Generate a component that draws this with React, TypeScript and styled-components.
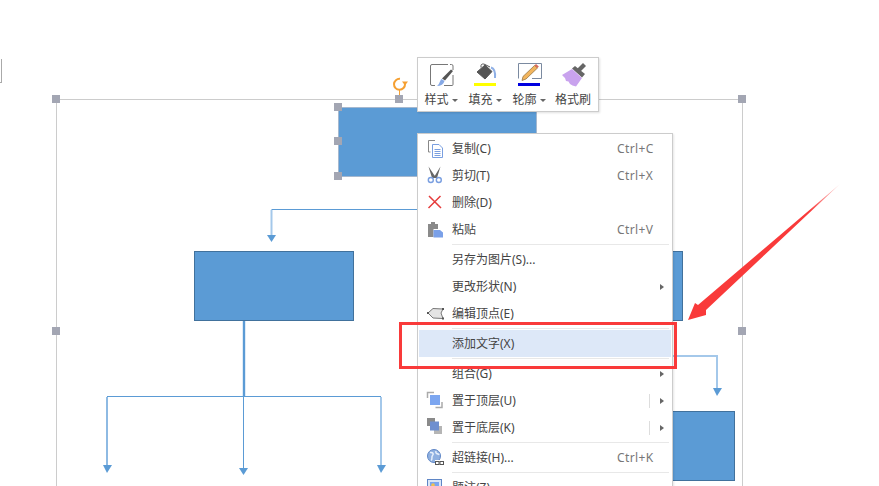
import React, { FunctionComponent, ReactNode } from 'react';
import styled, { createGlobalStyle } from 'styled-components';

const GlobalStyle = createGlobalStyle`
  html, body {
    margin: 0;
    padding: 0;
    background: #fff;
    overflow: hidden;
  }
`;

const Canvas = styled.div`
  position: relative;
  width: 879px;
  height: 486px;
  overflow: hidden;
  background: #fff;
  font-family: "Noto Sans", "Noto Sans CJK SC", sans-serif;
  font-size: 12px;
  color: #444;
`;

// the scrap of a page edge on the far left
const EdgeMark = styled.div`
  position: absolute;
  left: 0;
  top: 59px;
  width: 1px;
  height: 23px;
  border-right: 1px solid #aaa;
  border-bottom: 1px solid #aaa;
`;

const SelectionFrame = styled.div`
  position: absolute;
  left: 56px;
  top: 99px;
  width: 685px;
  height: 420px;
  border: 1px solid #ccc;
`;

const Shape = styled.div<{ $x: number; $y: number; $w: number; $h: number; $selected?: boolean }>`
  position: absolute;
  left: ${(p) => p.$x}px;
  top: ${(p) => p.$y}px;
  width: ${(p) => p.$w}px;
  height: ${(p) => p.$h}px;
  box-sizing: border-box;
  background: #5b9bd5;
  border: 1px solid ${(p) => (p.$selected ? '#a5b8cf' : '#41719c')};
`;

const Handle = styled.div<{ $x: number; $y: number }>`
  position: absolute;
  left: ${(p) => p.$x - 4}px;
  top: ${(p) => p.$y - 4}px;
  width: 8px;
  height: 8px;
  background: #a3a6b3;
`;

const Lines = styled.svg`
  position: absolute;
  left: 0;
  top: 0;
`;

const RotateGrip = styled.svg`
  position: absolute;
  left: 391px;
  top: 76px;
`;

const Toolbar = styled.div`
  position: absolute;
  left: 417px;
  top: 57px;
  display: flex;
  width: 182px;
  height: 55px;
  box-sizing: border-box;
  padding: 3px 1px;
  background: #fff;
  border: 1px solid #ccc;
  box-shadow: 1px 1px 2px rgba(0, 0, 0, 0.12);
`;

const ToolItem = styled.div`
  display: flex;
  flex-direction: column;
  align-items: center;
  width: 44px;
  svg {
    display: block;
  }
`;

const ToolLabel = styled.div`
  display: flex;
  align-items: center;
  gap: 3px;
  height: 16px;
  margin-top: 3px;
  line-height: 16px;
  white-space: nowrap;
`;

const Caret = styled.span`
  width: 0;
  height: 0;
  margin-top: 1px;
  border-left: 3px solid transparent;
  border-right: 3px solid transparent;
  border-top: 3px solid #666;
`;

const Menu = styled.div`
  position: absolute;
  left: 417px;
  top: 133px;
  width: 256px;
  box-sizing: border-box;
  padding: 1px;
  background: #fff;
  border: 1px solid #ccc;
  box-shadow: 1px 1px 2px rgba(0, 0, 0, 0.1);
`;

const Row = styled.div<{ $active?: boolean }>`
  display: flex;
  align-items: center;
  height: 27px;
  background: ${(p) => (p.$active ? '#dde8f8' : 'transparent')};
`;

const IconCell = styled.div`
  align-self: flex-start;
  width: 27px;
  height: 20px;
  margin-top: 4px;
  padding-left: 6px;
  svg {
    display: block;
  }
`;

const RowLabel = styled.div`
  flex: 1;
  line-height: 27px;
  white-space: nowrap;
`;

const Shortcut = styled.div`
  width: 54px;
  color: #777;
  letter-spacing: 0.4px;
`;

const SubmenuDivider = styled.div`
  width: 1px;
  height: 14px;
  margin-right: 10px;
  background: #ddd;
`;

const SubmenuArrow = styled.div`
  width: 0;
  height: 0;
  margin-right: 7px;
  border-top: 3px solid transparent;
  border-bottom: 3px solid transparent;
  border-left: 4px solid #666;
`;

const Separator = styled.div`
  height: 1px;
  margin: 1px 2px 1px 33px;
  background: #e8e8e8;
`;

const Callout = styled.div`
  position: absolute;
  left: 399px;
  top: 322px;
  width: 278px;
  height: 47px;
  box-sizing: border-box;
  border: 3px solid #f93a3a;
`;

const Pointer = styled.svg`
  position: absolute;
  left: 680px;
  top: 176px;
`;

const Icon20: FunctionComponent<{ children: ReactNode }> = ({ children }) => (
  <svg width="20" height="20" viewBox="0 0 20 20" fill="none">{children}</svg>
);

const Icon28: FunctionComponent<{ children: ReactNode }> = ({ children }) => (
  <svg width="28" height="28" viewBox="0 0 28 28" fill="none">{children}</svg>
);

const StyleIcon = () => (
  <Icon28>
    <path d="M21 3.500H5a1.500 1.500 0 0 0-1.500 1.500v18A1.500 1.500 0 0 0 5 24.500h3M17 24.500h8a1 1 0 0 0 1-1V14M26 9V5a1.500 1.500 0 0 0-1.500-1.500H23" stroke="#777" />
    <path d="M26 10 24 8.500 15 17.500 18 19.500Z" fill="#555" />
    <path d="M14.500 18 17.500 20C16.500 23.500 14 25 10 25 12.500 23.500 12.500 20 14.500 18Z" fill="#86a9e6" />
  </Icon28>
);

const FillIcon = () => (
  <Icon28>
    <path d="M14 4 21 10.500 14 18 6 11Z" fill="#555" stroke="#555" strokeLinejoin="round" />
    <path d="M10 6.500V4.500C10 3 12.500 2.500 14 3.500L19 6" stroke="#555" />
    <path d="M20 6.500C23.500 7.500 24.500 11 24 17" stroke="#8fb0e6" strokeWidth="2" />
    <rect x="3" y="22" width="22" height="3" fill="#ffff00" />
  </Icon28>
);

const OutlineIcon = () => (
  <Icon28>
    <path d="M3.500 17.500V2.500H26.500V17.500H17" stroke="#7b8aa0" />
    <path d="M19.500 4.500 22.500 7 11 18 7 19.500 8 15.500Z" fill="#f2b55e" stroke="#8a6a3a" strokeWidth="0.7" />
    <path d="M19.500 4.500 21 3 23.800 5.600 22.500 7Z" fill="#d9685a" />
    <rect x="3" y="22" width="22" height="3" fill="#0000e0" />
  </Icon28>
);

const PainterIcon = () => (
  <Icon28>
    <path d="M18 8 24 2 27 5 21 11Z" fill="#666" />
    <path d="M13 7.500 16 5 26 13 23 16.500Z" fill="#666" />
    <path d="M3 14 13 8 23 17 17 25.500 13.500 24.500 11 23 9.500 20.500 7 20 6 17Z" fill="#c9a3ee" />
  </Icon28>
);

const CopyIcon = () => (
  <Icon20>
    <path d="M10 1.500H3.500V13H5.500" stroke="#888" />
    <path d="M7.500 5.500H14L17.500 9V18.500H7.500Z" fill="#fff" stroke="#7a9fe0" />
    <path d="M9.500 10.500H15.500M9.500 12.500H15.500M9.500 14.500H15.500M9.500 16.500H15.500" stroke="#7a9fe0" />
  </Icon20>
);

const CutIcon = () => (
  <Icon20>
    <path d="M3.500 0.500 9.500 9.500 12 12 7 12Z" fill="#666" />
    <path d="M15.500 0.500 10 9.500 7 12 12 12Z" fill="#666" />
    <circle cx="5.800" cy="14" r="2.500" stroke="#7a9fe0" strokeWidth="1.400" />
    <circle cx="13.800" cy="14" r="2.500" stroke="#7a9fe0" strokeWidth="1.400" />
  </Icon20>
);

const DeleteIcon = () => (
  <Icon20>
    <path d="M4 3 16 15M15.500 3 3.500 15" stroke="#e63c3c" strokeWidth="1.500" />
  </Icon20>
);

const PasteIcon = () => (
  <Icon20>
    <path d="M3 4H6V2H10V4H13V9H8.500V17H3Z" fill="#8a8a8a" />
    <path d="M8.500 10H15L18 12.500V17.500H8.500Z" fill="#7aa0e8" />
  </Icon20>
);

const EditPointsIcon = () => (
  <Icon20>
    <path d="M3 9 8 4.500 18 5 16 9 18 14.500 8 14Z" fill="#e4e4e4" stroke="#777" />
    <rect x="2" y="8" width="2" height="2" fill="#555" />
    <rect x="17" y="4" width="2" height="2" fill="#555" />
    <rect x="17" y="13.500" width="2" height="2" fill="#555" />
  </Icon20>
);

const FrontIcon = () => (
  <Icon20>
    <path d="M2.500 7V1.500H9" stroke="#aaa" strokeWidth="1.500" />
    <path d="M17 11V16.500H10.500" stroke="#aaa" strokeWidth="1.500" />
    <rect x="5" y="4" width="10" height="10" fill="#7ca6f0" />
  </Icon20>
);

const BackIcon = () => (
  <Icon20>
    <rect x="2" y="0" width="8" height="8" fill="#8a8a8a" />
    <rect x="9" y="8" width="8" height="8" fill="#b5b5b5" />
    <rect x="5" y="3.500" width="9" height="9" fill="#6f8fcf" />
  </Icon20>
);

const LinkIcon = () => (
  <Icon20>
    <circle cx="9" cy="8" r="6.500" fill="#8fb0e0" stroke="#5f86c6" />
    <path d="M5 4.500C8 4 9 6 7.500 7.500 6 9 8 11 6 12.500M11 3C10 6 13 6 14.500 6.500" stroke="#e8f0fb" strokeWidth="1.500" />
    <rect x="10" y="12" width="9" height="5" fill="#fff" />
    <rect x="10.500" y="13.500" width="3.500" height="3" stroke="#555" />
    <rect x="15" y="13.500" width="3.500" height="3" stroke="#555" />
  </Icon20>
);

const NoteIcon = () => (
  <Icon20>
    <rect x="2.500" y="1.500" width="14" height="14" fill="#dbe6f7" stroke="#5f86c6" />
    <rect x="5" y="4" width="9" height="8" fill="#7ca6f0" />
    <circle cx="8" cy="7" r="1.800" fill="#f2c14e" />
  </Icon20>
);

type MenuEntry =
  | { kind: 'separator' }
  | {
      kind: 'item';
      label: string;
      icon?: ReactNode;
      shortcut?: string;
      submenu?: boolean;
      split?: boolean;
      active?: boolean;
    };

const menuEntries: MenuEntry[] = [
  { kind: 'item', label: '复制(C)', icon: <CopyIcon />, shortcut: 'Ctrl+C' },
  { kind: 'item', label: '剪切(T)', icon: <CutIcon />, shortcut: 'Ctrl+X' },
  { kind: 'item', label: '删除(D)', icon: <DeleteIcon /> },
  { kind: 'item', label: '粘贴', icon: <PasteIcon />, shortcut: 'Ctrl+V' },
  { kind: 'separator' },
  { kind: 'item', label: '另存为图片(S)...' },
  { kind: 'item', label: '更改形状(N)', submenu: true },
  { kind: 'item', label: '编辑顶点(E)', icon: <EditPointsIcon /> },
  { kind: 'separator' },
  { kind: 'item', label: '添加文字(X)', active: true },
  { kind: 'separator' },
  { kind: 'item', label: '组合(G)', submenu: true },
  { kind: 'item', label: '置于顶层(U)', icon: <FrontIcon />, submenu: true, split: true },
  { kind: 'item', label: '置于底层(K)', icon: <BackIcon />, submenu: true, split: true },
  { kind: 'separator' },
  { kind: 'item', label: '超链接(H)...', icon: <LinkIcon />, shortcut: 'Ctrl+K' },
  { kind: 'separator' },
  { kind: 'item', label: '题注(Z)', icon: <NoteIcon /> },
];

const handles = [
  [56, 99], [399, 99], [742, 99], [56, 331], [742, 331],
  [338, 107], [338, 141], [338, 176],
];

const App: FunctionComponent = () => (
  <>
    <GlobalStyle />
    <Canvas>
      <EdgeMark />
      <SelectionFrame />

      <Shape $x={338} $y={107} $w={199} $h={70} $selected />
      <Shape $x={194} $y={251} $w={160} $h={70} />
      <Shape $x={640} $y={251} $w={43} $h={70} />
      <Shape $x={640} $y={411} $w={95} $h={70} />

      <Lines width="879" height="486" viewBox="0 0 879 486" fill="none">
        <path d="M417 209.500H271.500" stroke="#5b9bd5" />
        <path d="M271.500 210V235" stroke="#a4c8ea" strokeWidth="2" />
        <path d="M267 235H276L271.500 242Z" fill="#5b9bd5" />
        <path d="M244 321V396" stroke="#5b9bd5" strokeWidth="2.400" />
        <path d="M107 396.500H381" stroke="#5b9bd5" />
        <path d="M107 397V466" stroke="#a4c8ea" strokeWidth="2" />
        <path d="M107 397V466" stroke="#5b9bd5" strokeWidth="0.6" />
        <path d="M243.500 397V468" stroke="#5b9bd5" />
        <path d="M381 397V466" stroke="#a4c8ea" strokeWidth="2" />
        <path d="M103 465H112L107 473Z" fill="#5b9bd5" />
        <path d="M239 468H248L243.500 475Z" fill="#5b9bd5" />
        <path d="M377 465H386L381 473Z" fill="#5b9bd5" />
        <path d="M672 356H717V388" stroke="#a4c8ea" strokeWidth="2" />
        <path d="M713 388H722L717 396Z" fill="#5b9bd5" />
      </Lines>

      {handles.map(([x, y]) => (
        <Handle key={`${x}-${y}`} $x={x} $y={y} />
      ))}

      <RotateGrip width="18" height="20" viewBox="0 0 18 20" fill="none">
        <path d="M14 8A5.500 5.500 0 1 1 9 2.800" stroke="#f5a033" strokeWidth="2" />
        <path d="M11 5.500H17L14 9.500Z" fill="#f5a033" />
        <path d="M8.500 14V19" stroke="#f5a033" />
      </RotateGrip>

      <Toolbar>
        <ToolItem>
          <StyleIcon />
          <ToolLabel>样式<Caret /></ToolLabel>
        </ToolItem>
        <ToolItem>
          <FillIcon />
          <ToolLabel>填充<Caret /></ToolLabel>
        </ToolItem>
        <ToolItem>
          <OutlineIcon />
          <ToolLabel>轮廓<Caret /></ToolLabel>
        </ToolItem>
        <ToolItem>
          <PainterIcon />
          <ToolLabel>格式刷</ToolLabel>
        </ToolItem>
      </Toolbar>

      <Menu>
        {menuEntries.map((entry, key) => (entry.kind === 'separator' ? (
          <Separator key={key} />
        ) : (
          <Row key={key} $active={entry.active}>
            <IconCell>{entry.icon}</IconCell>
            <RowLabel>{entry.label}</RowLabel>
            {entry.shortcut && <Shortcut>{entry.shortcut}</Shortcut>}
            {entry.split && <SubmenuDivider />}
            {entry.submenu && <SubmenuArrow />}
          </Row>
        )))}
      </Menu>

      <Callout />

      <Pointer width="170" height="150" viewBox="0 0 170 150">
        <defs>
          <linearGradient id="pointerFade" x1="1" y1="0" x2="0" y2="1">
            <stop offset="0" stopColor="#f93a3a" stopOpacity="0.2" />
            <stop offset="0.2" stopColor="#f93a3a" />
          </linearGradient>
        </defs>
        <path d="M8 144 15 127 18 129 160 8 26 134 26 139Z" fill="url(#pointerFade)" />
      </Pointer>
    </Canvas>
  </>
);

export default App;
